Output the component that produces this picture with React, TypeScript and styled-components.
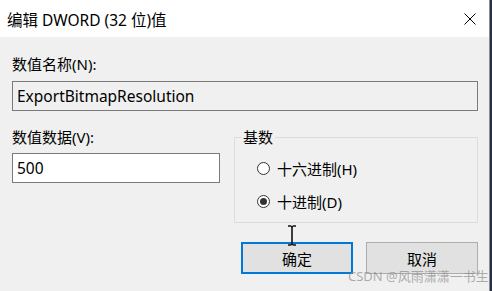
import React from "react";
import styled, { createGlobalStyle } from "styled-components";

const Global = createGlobalStyle`
  html, body { margin: 0; padding: 0; background: #f0f0f0; }
  body { width: 492px; height: 291px; overflow: hidden; }
  * { box-sizing: border-box; }
`;

const FONT = `"Noto Sans", "Noto Sans CJK SC", sans-serif`;

const Screen = styled.div`
  display: flex;
  width: 492px;
  height: 291px;
  font-family: ${FONT};
  color: #000;
`;

const Window = styled.div`
  width: 489px;
  height: 291px;
  display: flex;
  flex-direction: column;
  background: #f0f0f0;
  position: relative;
`;

const Desktop = styled.div`
  width: 3px;
  height: 291px;
  border-left: 1px solid #8c8c8c;
  background: #263049;
`;

const TitleBar = styled.div`
  height: 37px;
  background: #fff;
  display: flex;
  align-items: center;
  justify-content: space-between;
  padding: 0 13px 0 7px;
`;

const Title = styled.div`
  font-size: 15.5px;
  line-height: 20px;
  margin-top: 2px;
  white-space: nowrap;
`;

const Body = styled.div`
  flex: 1;
  padding: 18px 11px 0 12px;
  display: flex;
  flex-direction: column;
`;

const Label = styled.div`
  font-size: 15px;
  line-height: 18px;
  height: 18px;
  white-space: nowrap;
`;

const TextBox = styled.div<{ $readonly?: boolean }>`
  height: 30px;
  border: 1px solid #7a7a7a;
  background: ${(p) => (p.$readonly ? "#f0f0f0" : "#fff")};
  font-size: 15.5px;
  line-height: 28px;
  padding-left: 4px;
  white-space: nowrap;
`;

const NameBox = styled(TextBox)`
  margin-top: 8px;
`;

const MiddleRow = styled.div`
  display: flex;
  gap: 14px;
  margin-top: 17px;
`;

const DataColumn = styled.div`
  width: 208px;
  display: flex;
  flex-direction: column;
  gap: 7px;
`;

const GroupBox = styled.fieldset`
  width: 244px;
  height: 95px;
  margin: 0;
  padding: 0 0 0 22px;
  border: 1px solid #dcdcdc;
  min-inline-size: 0;
`;

const Legend = styled.legend`
  font-size: 15px;
  line-height: 18px;
  padding: 0 2px;
  margin-left: -16px;
`;

const RadioList = styled.div`
  display: flex;
  flex-direction: column;
  gap: 13px;
  margin-top: 12px;
`;

const RadioRow = styled.div`
  display: flex;
  align-items: center;
  height: 20px;
  gap: 7px;
  font-size: 15px;
  white-space: nowrap;
`;

const RadioCircle = styled.span<{ $checked?: boolean }>`
  width: 13px;
  height: 13px;
  border-radius: 50%;
  border: 1px solid #333;
  background: #fff;
  display: flex;
  align-items: center;
  justify-content: center;
  flex: none;
  &::after {
    content: "";
    width: 7px;
    height: 7px;
    border-radius: 50%;
    background: ${(p) => (p.$checked ? "#333" : "transparent")};
  }
`;

const ButtonRow = styled.div`
  display: flex;
  justify-content: flex-end;
  gap: 13px;
  margin-top: 19px;
`;

const Button = styled.div<{ $default?: boolean }>`
  width: 112px;
  height: 32px;
  background: #e1e1e1;
  border: ${(p) => (p.$default ? "2px solid #0078d7" : "1px solid #adadad")};
  display: flex;
  align-items: center;
  justify-content: center;
  font-size: 15px;
`;

const Watermark = styled.div`
  position: absolute;
  left: 348px;
  top: 268px;
  font-size: 13px;
  line-height: 16px;
  color: rgba(140, 140, 140, 0.7);
  white-space: nowrap;
  pointer-events: none;
`;

const Cursor = styled.svg`
  position: absolute;
  left: 287px;
  top: 225px;
`;

export default function App() {
  return (
    <>
      <Global />
      <Screen>
        <Window>
          <TitleBar>
            <Title>编辑 DWORD (32 位)值</Title>
            <svg width="12" height="12" viewBox="0 0 12 12">
              <path d="M0.5 0.5 L11.5 11.5 M11.5 0.5 L0.5 11.5" stroke="#000" strokeWidth="1" fill="none" />
            </svg>
          </TitleBar>
          <Body>
            <Label>数值名称(N):</Label>
            <NameBox $readonly>ExportBitmapResolution</NameBox>
            <MiddleRow>
              <DataColumn>
                <Label>数值数据(V):</Label>
                <TextBox>500</TextBox>
              </DataColumn>
              <GroupBox>
                <Legend>基数</Legend>
                <RadioList>
                  <RadioRow>
                    <RadioCircle />
                    十六进制(H)
                  </RadioRow>
                  <RadioRow>
                    <RadioCircle $checked />
                    十进制(D)
                  </RadioRow>
                </RadioList>
              </GroupBox>
            </MiddleRow>
            <ButtonRow>
              <Button $default>确定</Button>
              <Button>取消</Button>
            </ButtonRow>
          </Body>
          <Cursor width="10" height="21" viewBox="0 0 10 21">
            <path d="M1 1 H4 M6 1 H9 M5 1.5 V19.5 M1 20 H4 M6 20 H9 M4 1.5 H6 M4 19.5 H6" stroke="#111" strokeWidth="1.6" fill="none" />
          </Cursor>
          <Watermark>CSDN @风雨潇潇一书生</Watermark>
        </Window>
        <Desktop />
      </Screen>
    </>
  );
}
